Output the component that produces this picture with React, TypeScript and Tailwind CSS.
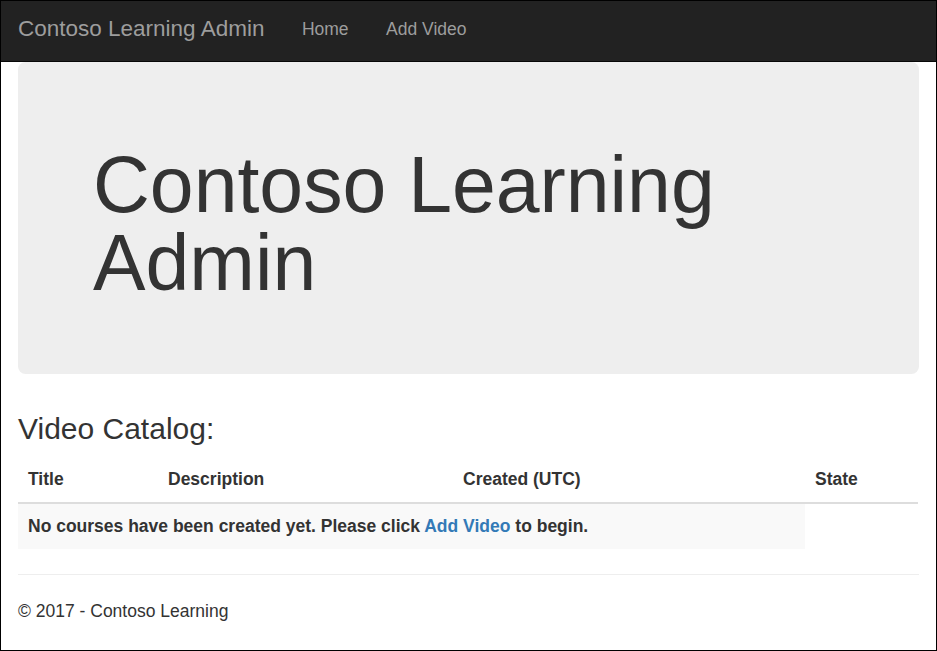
export default function App() {
  return (
    <div className="w-[937px] h-[651px] border border-black bg-white overflow-hidden text-[#333] font-['Liberation_Sans',Arial,sans-serif]">
      <nav className="h-[61px] bg-[#222] border-b border-[#080808] flex pl-[17px] text-[#9d9d9d]">
        <a className="pt-[15px] text-[22.5px] leading-[25px] whitespace-nowrap">Contoso Learning Admin</a>
        <a className="ml-[37.5px] pt-[16px] text-[17.5px] leading-[25px] whitespace-nowrap">Home</a>
        <a className="ml-[37.5px] pt-[16px] text-[17.5px] leading-[25px] whitespace-nowrap">Add Video</a>
      </nav>
      <div className="px-[17px]">
        <div className="h-[312px] rounded-[7.5px] bg-[#eee] pl-[75px] pr-[75px] pt-[84px]">
          <h1 className="text-[78.75px] leading-[78px] font-normal">Contoso Learning Admin</h1>
        </div>
        <h3 className="mt-[38px] text-[30px] leading-[33px] font-normal">Video Catalog:</h3>
        <div className="mt-[12px] grid grid-cols-[140px_295px_352px_113px] text-[17.5px] leading-[25px] font-bold">
          <div className="p-[10px] border-b-2 border-[#ddd]">Title</div>
          <div className="p-[10px] border-b-2 border-[#ddd]">Description</div>
          <div className="p-[10px] border-b-2 border-[#ddd]">Created (UTC)</div>
          <div className="p-[10px] border-b-2 border-[#ddd]">State</div>
          <div className="col-span-3 p-[10px] bg-[#f9f9f9]">
            No courses have been created yet. Please click <a className="text-[#337ab7]">Add Video</a> to begin.
          </div>
          <div className="p-[10px]"></div>
        </div>
        <hr className="mt-[25px] border-0 border-t border-[#eee]" />
        <p className="mt-[24px] text-[17.5px] leading-[25px]">© 2017 - Contoso Learning</p>
      </div>
    </div>
  );
}
